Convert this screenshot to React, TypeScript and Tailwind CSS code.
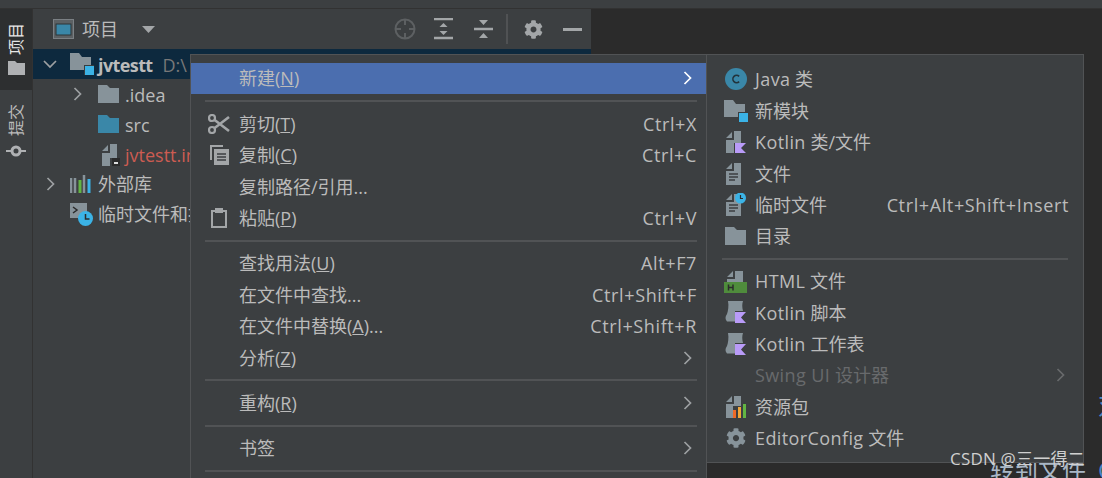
import { ReactNode } from "react";
import { FaCog } from "react-icons/fa";

const GREY = "#87939a";

function Folder({ color = GREY }: { color?: string }) {
  return (
    <svg width="21" height="18" viewBox="0 0 21 18">
      <path d="M0 0h9l3 3h9v15H0z" fill={color} />
    </svg>
  );
}

function ModuleFolder() {
  return (
    <svg width="24" height="22" viewBox="0 0 24 22">
      <path d="M0 0h9l3 4h9v13H0z" fill={GREY} />
      <rect x="14" y="12" width="10" height="10" fill="#3a3d3f" />
      <rect x="15" y="13" width="9" height="9" fill="#3bb3e6" />
    </svg>
  );
}

function KotlinFile() {
  return (
    <svg width="21" height="24" viewBox="0 0 21 24">
      <path d="M1 8l6-6v6zM9 1h7v12H9v10H1V10h8z" fill={GREY} />
      <path d="M10 13h11l-5 5 5 5H10z" fill="#b99bf8" />
    </svg>
  );
}

function KotlinScript() {
  return (
    <svg width="21" height="23" viewBox="0 0 21 23">
      <path d="M3 0h15c-1 3-1 6 0 10h-8v10.500H2c-2-2-2-5 0-7.500 1-3 2-8 1-13z" fill={GREY} />
      <path d="M10 11h11l-5 5.500 5 5.500H10z" fill="#b99bf8" />
    </svg>
  );
}

function TextFile({ clock }: { clock?: boolean }) {
  return (
    <svg width="21" height="23" viewBox="0 0 21 23">
      <path d="M1 7l6-6v6zM9 1h7v22H1V9h8z" fill={GREY} />
      <path d="M4 12h9M4 15h9M4 18h6" stroke="#3c3f41" strokeWidth="1.400" />
      {clock && (
        <g>
          <circle cx="15.500" cy="5" r="5.500" fill="#3bb3e6" />
          <path d="M15.500 2v3.500h2.500" stroke="#2b2b2b" strokeWidth="1.200" fill="none" />
        </g>
      )}
    </svg>
  );
}

function ChevronR({ color = "#9da0a2" }: { color?: string }) {
  return (
    <svg width="9" height="14" viewBox="0 0 9 14">
      <path d="M1.500 1l6 6-6 6" stroke={color} strokeWidth="1.700" fill="none" />
    </svg>
  );
}

function ChevronD() {
  return (
    <svg width="14" height="9" viewBox="0 0 14 9">
      <path d="M1 1l6 6 6-6" stroke="#9da0a2" strokeWidth="1.700" fill="none" />
    </svg>
  );
}

function Scissors() {
  return (
    <svg width="22" height="20" viewBox="0 0 22 20">
      <circle cx="4" cy="4" r="3" fill="none" stroke="#a3a6a8" strokeWidth="2.200" />
      <circle cx="4" cy="16" r="3" fill="none" stroke="#a3a6a8" strokeWidth="2.200" />
      <path d="M6 5.500L21 17M6 14.500L21 3" stroke="#a3a6a8" strokeWidth="2.600" />
    </svg>
  );
}

function Copy() {
  return (
    <svg width="19" height="20" viewBox="0 0 19 20">
      <path d="M0 0h13v2H2v13H0z" fill="#a3a6a8" />
      <path d="M4 4h15v16H4z" fill="#a3a6a8" />
      <path d="M7 9h9M7 12h9M7 15h9" stroke="#3c3f41" strokeWidth="1.500" />
    </svg>
  );
}

function Paste() {
  return (
    <svg width="16" height="20" viewBox="0 0 16 20">
      <path d="M1 3h14v16H1z" fill="none" stroke="#a3a6a8" strokeWidth="2" />
      <rect x="4" y="0" width="8" height="5" fill="#a3a6a8" />
    </svg>
  );
}

function HtmlFile() {
  return (
    <svg width="23" height="23" viewBox="0 0 23 23">
      <path d="M3 7l6-6v6zM11 1h8v11H3V9h8z" fill={GREY} />
      <rect x="0" y="12" width="23" height="11" fill="#4f8c3c" />
      <path d="M4.500 14.500v6M9 14.500v6M4.500 17.500H9" stroke="#2b2b2b" strokeWidth="1.500" />
    </svg>
  );
}

function BundleFile() {
  return (
    <svg width="21" height="23" viewBox="0 0 21 23">
      <path d="M1 7l6-6v6zM9 1h7v10H8v12H1V9h8z" fill={GREY} />
      <rect x="8" y="15" width="3" height="8" fill="#ee6a28" />
      <rect x="13" y="12" width="3" height="11" fill="#f2a63a" />
      <rect x="18" y="9" width="3" height="14" fill="#62b543" />
    </svg>
  );
}

function Lt({ children }: { children: ReactNode }) {
  return <span className="tracking-[0.4px]">{children}</span>;
}

function Row({
  icon,
  label,
  keys,
  arrow,
  active,
  dim,
  compact,
}: {
  icon?: ReactNode;
  label: ReactNode;
  keys?: string;
  arrow?: boolean;
  active?: boolean;
  dim?: boolean;
  compact?: boolean;
}) {
  return (
    <div
      className={
        "flex items-center " +
        (compact ? "h-[31.4px] pr-[14px] " : "h-[31.5px] pr-[9px] ") +
        (active ? "bg-[#4b6eaf] " : "") +
        (dim ? "text-[#686a6c]" : "text-[#bbbbbb]")
      }
    >
      <div className={"flex justify-center shrink-0 w-[48px] " + (compact ? "pl-[9px]" : "pl-[8px]")}>{icon}</div>
      <span className="whitespace-nowrap">{label}</span>
      <span className="ml-auto whitespace-nowrap tracking-[0.62px]">{keys}</span>
      {arrow && (
        <span className={"ml-auto flex " + (compact ? "mr-[4px]" : "mr-[5px]")}>
          <ChevronR color={active ? "#ffffff" : dim ? "#686a6c" : "#9da0a2"} />
        </span>
      )}
    </div>
  );
}

function Sep() {
  return (
    <div className="h-[13.75px] flex items-center pl-[14px] pr-[9px]">
      <div className="h-[2px] w-full bg-[#515355]" />
    </div>
  );
}

function TreeRow({
  pad,
  arrow,
  icon,
  selected,
  children,
}: {
  pad: number;
  arrow?: ReactNode;
  icon: ReactNode;
  selected?: boolean;
  children: ReactNode;
}) {
  return (
    <div
      className={"h-[30px] flex items-center whitespace-nowrap text-[#bbbbbb] " + (selected ? "bg-[#0d293e]" : "")}
      style={{ paddingLeft: pad }}
    >
      <div className="w-[20px] flex justify-center shrink-0">{arrow}</div>
      {icon}
      {children}
    </div>
  );
}

export default function App() {
  return (
    <div
      className="relative w-[1102px] h-[478px] overflow-hidden bg-[#3c3f41] text-[18px] leading-none flex flex-col"
      style={{ fontFamily: '"Open Sans", "Noto Sans CJK SC", sans-serif' }}
    >
      <div className="h-[9px] shrink-0 border-b border-[#323232]" />
      <div className="flex flex-1 min-h-0">
        {/* tool window strip */}
        <div className="w-[33px] shrink-0 border-r border-[#323232] text-[#bbbbbb]">
          <div className="h-[81px] bg-[#2d2f30] flex flex-col items-center pt-[14px] gap-[6px]">
            <span className="text-[16px] text-[#e6e6e6] [writing-mode:vertical-rl] [text-orientation:sideways] rotate-180">项目</span>
            <svg width="17" height="14" viewBox="0 0 17 14">
              <path d="M0 0h7l2 2h8v12H0z" fill="#afb1b3" />
            </svg>
          </div>
          <div className="flex flex-col items-center pt-[14px] gap-[9px]">
            <span className="text-[16px] [writing-mode:vertical-rl] [text-orientation:sideways] rotate-180">提交</span>
            <svg width="20" height="12" viewBox="0 0 20 12">
              <circle cx="10" cy="6" r="4" fill="none" stroke="#afb1b3" strokeWidth="3" />
              <path d="M0 6h5M15 6h5" stroke="#afb1b3" strokeWidth="2" />
            </svg>
          </div>
        </div>

        {/* project panel */}
        <div className="w-[558px] shrink-0">
          <div className="h-[40px] flex items-center pl-[20px] text-[#bbbbbb]">
            <svg width="21" height="20" viewBox="0 0 21 20">
              <rect x="0.500" y="0.500" width="20" height="19" fill="#5c6164" stroke="#7b8084" />
              <rect x="3" y="5" width="15" height="11" fill="#3a87a8" stroke="#2d3436" />
            </svg>
            <span className="ml-[8px]">项目</span>
            <svg className="ml-[24px]" width="13" height="7" viewBox="0 0 13 7">
              <path d="M0 0h13L6.500 7z" fill="#a3a6a8" />
            </svg>
            <svg className="ml-[239px]" width="22" height="22" viewBox="0 0 22 22">
              <circle cx="11" cy="11" r="9.500" fill="none" stroke="#5d6062" strokeWidth="2" />
              <path d="M11 1v6M11 15v6M1 11h6M15 11h6" stroke="#5d6062" strokeWidth="2" />
            </svg>
            <svg className="ml-[18px]" width="19" height="22" viewBox="0 0 19 22">
              <path d="M0 1h19M0 20h19" stroke="#a3a6a8" strokeWidth="2.500" />
              <path d="M9.500 5l4 4h-8zM9.500 17l4-4h-8z" fill="#a3a6a8" />
            </svg>
            <svg className="ml-[21px]" width="19" height="20" viewBox="0 0 19 20">
              <path d="M0 10h19" stroke="#a3a6a8" strokeWidth="2.500" />
              <path d="M5 1h9l-4.500 5zM5 19h9l-4.500-5z" fill="#a3a6a8" />
            </svg>
            <div className="ml-[13px] w-[2px] h-[30px] bg-[#505254]" />
            <FaCog className="ml-[16px]" size={19} color="#a3a6a8" />
            <div className="ml-[20px] w-[19px] h-[3px] bg-[#a3a6a8]" />
          </div>
          <TreeRow selected pad={7} arrow={<ChevronD />} icon={<span className="ml-[10px] mr-[4px] flex"><ModuleFolder /></span>}>
            <b className="font-bold tracking-[-0.6px] pt-[2px]">jvtestt</b>
            <span className="ml-[10px] text-[#787878] pt-[2px]">D:\</span>
          </TreeRow>
          <TreeRow pad={34} arrow={<ChevronR />} icon={<span className="ml-[11px] mr-[6px] flex"><Folder /></span>}>
            <span className="pt-[2px]">.idea</span>
          </TreeRow>
          <TreeRow pad={34} icon={<span className="ml-[11px] mr-[6px] flex"><Folder color="#3a87a8" /></span>}>
            <span className="pt-[2px]">src</span>
          </TreeRow>
          <TreeRow
            pad={34}
            icon={
              <span className="relative ml-[14px] mr-[5px] flex">
                <svg width="19" height="23" viewBox="0 0 19 23">
                  <path d="M1 8l6-6v6zM9 1h7v14H9v8H1V10h8z" fill={GREY} />
                  <rect x="11" y="15" width="8" height="8" fill="#2b2b2b" />
                  <rect x="13" y="19" width="4" height="2" fill="#dddddd" />
                </svg>
              </span>
            }
          >
            <span className="text-[#cc5c52] pt-[2px]">jvtestt.iml</span>
          </TreeRow>
          <TreeRow
            pad={7}
            arrow={<ChevronR />}
            icon={
              <span className="ml-[10px] mr-[7px] flex">
                <svg width="21" height="18" viewBox="0 0 21 18">
                  <path d="M1 3v15M5 3v15" stroke={GREY} strokeWidth="2.500" />
                  <path d="M10 5v13" stroke="#62b543" strokeWidth="3" />
                  <path d="M14 0v18" stroke={GREY} strokeWidth="2.500" />
                  <path d="M19 4v14" stroke="#3bb3e6" strokeWidth="3" />
                </svg>
              </span>
            }
          >
            外部库
          </TreeRow>
          <TreeRow
            pad={7}
            icon={
              <span className="ml-[10px] mr-[5px] flex">
                <svg width="23" height="23" viewBox="0 0 23 23">
                  <path d="M0 0h17v15H0z" fill={GREY} />
                  <path d="M3 4l4 3-4 3" stroke="#2b2b2b" strokeWidth="1.500" fill="none" />
                  <circle cx="15.500" cy="15.500" r="7.500" fill="#3bb3e6" />
                  <path d="M15.500 11v5h4" stroke="#2b2b2b" strokeWidth="1.500" fill="none" />
                </svg>
              </span>
            }
          >
            临时文件和控制台
          </TreeRow>
        </div>

        {/* editor */}
        <div className="flex-1 bg-[#2b2b2b] relative overflow-hidden">
          <span className="absolute left-[507px] top-[384px] text-[#4a88c7] text-[24px]">对</span>
          <span className="absolute left-[399px] top-[449px] text-[24px] text-[#a9b7c6] whitespace-nowrap">转到文件</span>
          <span className="absolute left-[507px] top-[449px] text-[24px] text-[#4a88c7]">C</span>
        </div>
      </div>

      {/* context menu */}
      <div className="absolute left-[190px] top-[54px] w-[517px] h-[430px] bg-[#3c3f41] border border-[#515355] pt-[7.6px]">
        <Row active label={<span>新建(<u>N</u>)</span>} arrow />
        <Sep />
        <Row icon={<Scissors />} label={<span>剪切(<u>T</u>)</span>} keys="Ctrl+X" />
        <Row icon={<Copy />} label={<span>复制(<u>C</u>)</span>} keys="Ctrl+C" />
        <Row label="复制路径/引用..." />
        <Row icon={<Paste />} label={<span>粘贴(<u>P</u>)</span>} keys="Ctrl+V" />
        <Sep />
        <Row label={<span>查找用法(<u>U</u>)</span>} keys="Alt+F7" />
        <Row label="在文件中查找..." keys="Ctrl+Shift+F" />
        <Row label={<span>在文件中替换(<u>A</u>)...</span>} keys="Ctrl+Shift+R" />
        <Row label={<span>分析(<u>Z</u>)</span>} arrow />
        <Sep />
        <Row label={<span>重构(<u>R</u>)</span>} arrow />
        <Sep />
        <Row label="书签" arrow />
        <Sep />
      </div>

      {/* new submenu */}
      <div className="absolute left-[706px] top-[54px] w-[378px] h-[409px] bg-[#3c3f41] border border-[#515355] pt-[8.7px]">
        <Row
          compact
          icon={
            <svg width="22" height="22" viewBox="0 0 21 21">
              <circle cx="10.500" cy="10.500" r="10.500" fill="#3a87a8" />
              <path d="M13.500 8a3.500 3.500 0 1 0 0 5" stroke="#22333b" strokeWidth="1.500" fill="none" />
            </svg>
          }
          label={<span><Lt>Java</Lt> 类</span>}
        />
        <Row compact icon={<ModuleFolder />} label="新模块" />
        <Row compact icon={<KotlinFile />} label={<span><Lt>Kotlin</Lt> 类/文件</span>} />
        <Row compact icon={<TextFile />} label="文件" />
        <Row compact icon={<TextFile clock />} label="临时文件" keys="Ctrl+Alt+Shift+Insert" />
        <Row compact icon={<Folder />} label="目录" />
        <div className="h-[13.6px] flex items-center pl-[15px] pr-[15px]">
          <div className="h-[2px] w-full bg-[#515355]" />
        </div>
        <Row compact icon={<HtmlFile />} label={<span><Lt>HTML</Lt> 文件</span>} />
        <Row compact icon={<KotlinScript />} label={<span><Lt>Kotlin</Lt> 脚本</span>} />
        <Row compact icon={<KotlinScript />} label={<span><Lt>Kotlin</Lt> 工作表</span>} />
        <Row compact dim label={<span><Lt>Swing UI</Lt> 设计器</span>} arrow />
        <Row compact icon={<BundleFile />} label="资源包" />
        <Row compact icon={<FaCog size={20} color={GREY} />} label={<span><Lt>EditorConfig</Lt> 文件</span>} />
      </div>

      <span className="absolute left-[950px] top-[450px] text-[17px] tracking-[0.2px] text-[#d0d0d0] whitespace-nowrap">CSDN @三一得二</span>
    </div>
  );
}
